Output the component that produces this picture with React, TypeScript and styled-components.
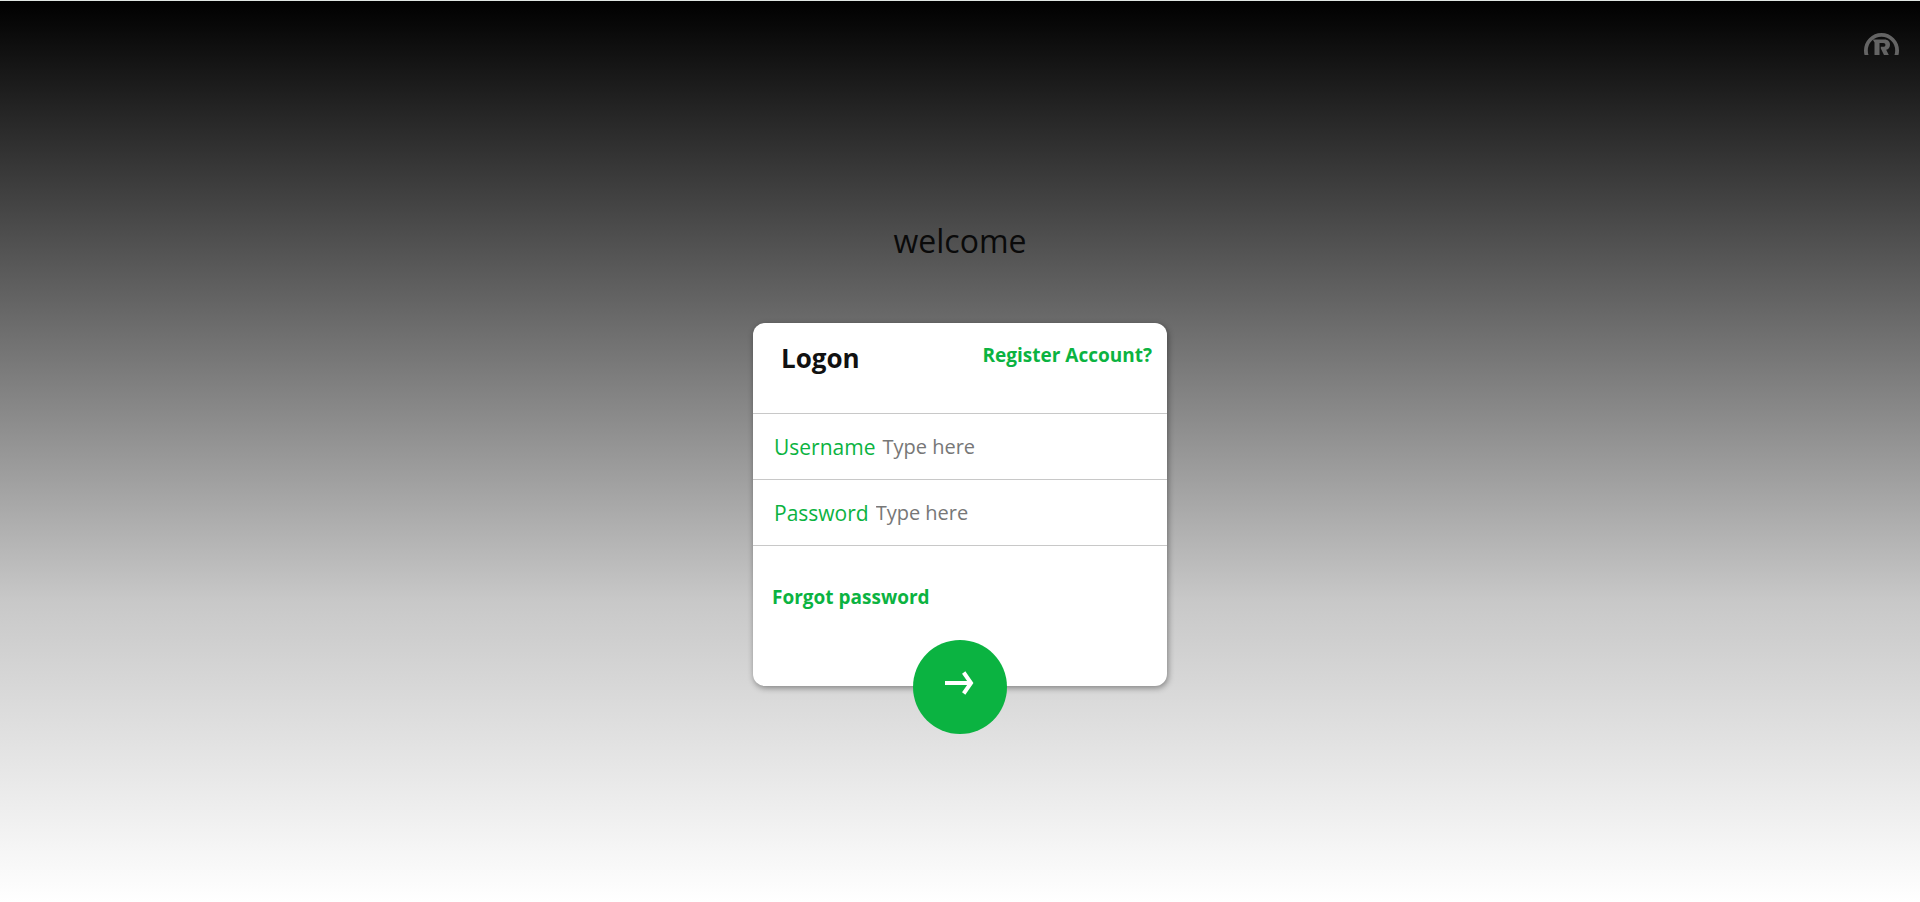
import styled, { createGlobalStyle } from "styled-components";

const GlobalStyle = createGlobalStyle`
  *, *::before, *::after { box-sizing: border-box; }
  body {
    margin: 0;
    font-family: "Open Sans", "Noto Sans", sans-serif;
    color: #111;
  }
`;

const Page = styled.div`
  min-height: 100vh;
  border-top: 1px solid #dfe5e2;
  background: linear-gradient(#000 0%, #c8c8c8 66.6%, #fff 100%);
`;

const TopBar = styled.header`
  display: flex;
  justify-content: flex-end;
  padding: 32px 20px 0;
`;

const BrandMark = styled.svg`
  display: block;
  width: 36px;
  height: 22px;
`;

const Main = styled.main`
  display: flex;
  flex-direction: column;
  align-items: center;
  padding: 160px 16px 48px;
`;

const Welcome = styled.h1`
  margin: 0 0 56px;
  color: #0a0a0a;
  font-size: 32px;
  font-weight: 400;
  line-height: 52px;
`;

const Card = styled.form`
  position: relative;
  width: 100%;
  max-width: 414px;
  padding-bottom: 73px;
  border-radius: 12px;
  background: #fff;
  box-shadow: 1px 2px 6px rgba(0, 0, 0, 0.4);
`;

const CardHeader = styled.div`
  display: flex;
  justify-content: space-between;
  align-items: flex-start;
  height: 91px;
  padding: 16px 15px 0 28px;
  border-bottom: 1px solid #c8c8c8;
`;

const Title = styled.h2`
  margin: 0;
  font-size: 26px;
  font-weight: 700;
  line-height: 38px;
`;

const GreenLink = styled.a`
  color: #0bb341;
  font-size: 19px;
  font-weight: 700;
  line-height: 32px;
  text-decoration: none;
`;

const Field = styled.div`
  display: flex;
  align-items: center;
  gap: 7px;
  height: 66px;
  padding: 0 20px 0 21px;
  border-bottom: 1px solid #c8c8c8;
`;

const Label = styled.label`
  color: #0bb341;
  font-size: 21px;
  line-height: 32px;
`;

const Input = styled.input`
  flex: 1;
  min-width: 0;
  padding: 0;
  border: 0;
  outline: 0;
  background: transparent;
  color: #111;
  font: inherit;
  font-size: 20px;
  line-height: 32px;

  &::placeholder {
    color: #777;
    opacity: 1;
  }
`;

const CardFooter = styled.div`
  display: flex;
  padding: 35px 19px 0;
`;

const SubmitButton = styled.button`
  position: absolute;
  bottom: -48px;
  left: 50%;
  display: flex;
  align-items: center;
  justify-content: center;
  width: 94px;
  height: 94px;
  margin-left: -47px;
  padding: 0 0 8px;
  border: 0;
  border-radius: 50%;
  background: #0bb341;
  cursor: pointer;
`;

export default function App() {
  return (
    <>
      <GlobalStyle />
      <Page>
        <TopBar>
          <BrandMark viewBox="0 0 36 22" fill="none" role="img" aria-label="Registered mark">
            <circle cx="17.5" cy="17.5" r="15.6" stroke="#646464" strokeWidth="3.8" />
            <path
              fillRule="evenodd"
              d="M8.700 6.500H20.500C24 6.500 26 8.600 26 11.700C26 14.300 24.600 16.200 22.200 16.800L24.800 22H20L16.800 15.500V13.800H19.200C20.700 13.800 21.400 13 21.400 11.900S20.700 10.100 19.200 10.100H15.500V22H10.500V9.600Z"
              fill="#646464"
            />
          </BrandMark>
        </TopBar>
        <Main>
          <Welcome>welcome</Welcome>
          <Card onSubmit={(event) => event.preventDefault()}>
            <CardHeader>
              <Title>Logon</Title>
              <GreenLink href="#register">Register Account?</GreenLink>
            </CardHeader>
            <Field>
              <Label htmlFor="username">Username</Label>
              <Input id="username" type="text" placeholder="Type here" />
            </Field>
            <Field>
              <Label htmlFor="password">Password</Label>
              <Input id="password" type="password" placeholder="Type here" />
            </Field>
            <CardFooter>
              <GreenLink href="#forgot">Forgot password</GreenLink>
            </CardFooter>
            <SubmitButton type="submit" aria-label="Log on">
              <svg width="30" height="24" viewBox="0 0 30 24" fill="none">
                <path d="M0 12H26M18.700 1.500L26 12L18.700 22.500" stroke="#fff" strokeWidth="4" />
              </svg>
            </SubmitButton>
          </Card>
        </Main>
      </Page>
    </>
  );
}
